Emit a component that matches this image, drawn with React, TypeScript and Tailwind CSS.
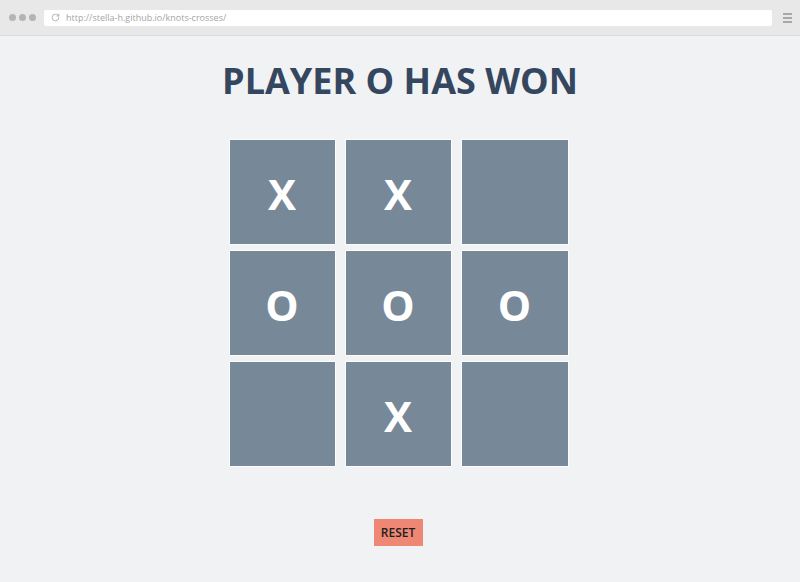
import { RotateCw } from 'lucide-react'

const BOARD = ['X', 'X', '', 'O', 'O', 'O', '', 'X', '']

function BrowserBar() {
  return (
    <div className="flex h-[36px] items-center gap-[11px] border-b border-[#dcdcdc] bg-[#e8e8e8] pl-[9px] pr-[8px]">
      <div className="flex gap-[3px]">
        <span className="h-[7px] w-[7px] rounded-full bg-[#b4b4b4]" />
        <span className="h-[7px] w-[7px] rounded-full bg-[#b4b4b4]" />
        <span className="h-[7px] w-[7px] rounded-full bg-[#b4b4b4]" />
      </div>
      <div className="-ml-[3px] flex h-[16px] flex-1 items-center gap-[6px] rounded-[2px] bg-white pl-[7px]">
        <RotateCw className="h-[9px] w-[9px] text-[#a0a0a0]" strokeWidth={2} />
        <span className="font-['Open_Sans',sans-serif] text-[9px] text-[#a5a5a5]">
          http://stella-h.github.io/knots-crosses/
        </span>
      </div>
      <div className="flex w-[9px] flex-col gap-[2px]">
        <span className="h-[2px] bg-[#a8a8a8]" />
        <span className="h-[2px] bg-[#a8a8a8]" />
        <span className="h-[2px] bg-[#a8a8a8]" />
      </div>
    </div>
  )
}

export default function App() {
  return (
    <div className="flex h-[582px] w-[800px] flex-col overflow-hidden bg-[#f0f2f4] font-['Lato',sans-serif]">
      <BrowserBar />
      <h1 className="mt-[18px] text-center font-['Open_Sans',sans-serif] text-[36px] font-bold leading-[53px] text-[#35465f]">
        PLAYER O HAS WON
      </h1>
      <div className="mt-[33px] flex justify-center pr-[3px]">
        <div className="grid grid-cols-[105px_105px_106px] gap-x-[11px] gap-y-[7px]">
          {BOARD.map((v, i) => (
            <div
              key={i}
              className="flex h-[104px] items-center justify-center bg-[#778899] pt-[2px] font-['Open_Sans',sans-serif] text-[42px] font-bold text-white outline outline-1 outline-white/80"
            >
              {v}
            </div>
          ))}
        </div>
      </div>
      <div className="mt-[53px] flex justify-center pr-[4px]">
        <button className="h-[27px] w-[49px] bg-[#ee8874] font-['Open_Sans',sans-serif] text-[12px] font-semibold text-[#1d1d1d]">
          RESET
        </button>
      </div>
    </div>
  )
}
